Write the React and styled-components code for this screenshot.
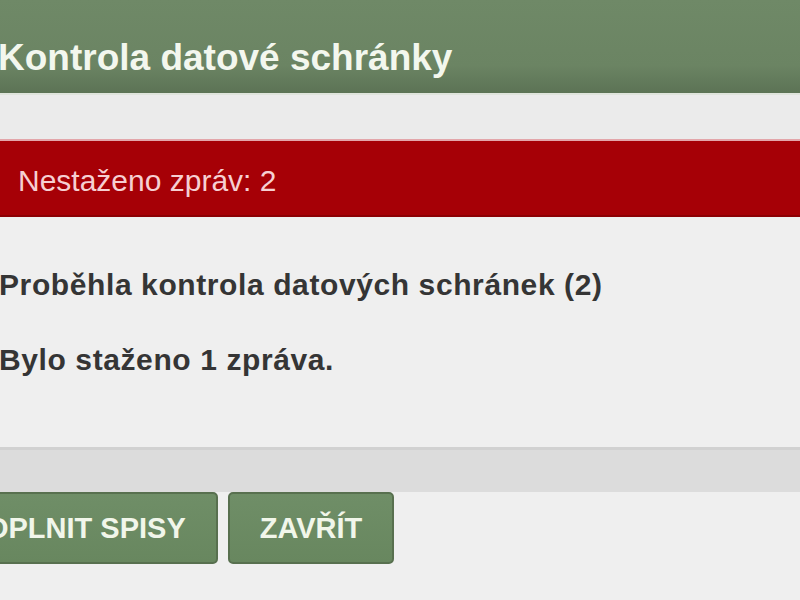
import React from "react";
import styled, { createGlobalStyle } from "styled-components";

const GlobalStyle = createGlobalStyle`
  html, body {
    margin: 0;
    padding: 0;
    background: #efefef;
    overflow: hidden;
  }
  body {
    font-family: "Liberation Sans", Arial, sans-serif;
  }
`;

const Dialog = styled.div`
  width: 900px;
  margin-left: -60px;
  display: flex;
  flex-direction: column;
`;

const Header = styled.div`
  height: 95px;
  display: flex;
  align-items: flex-start;
  padding: 39px 0 0 58px;
  background: linear-gradient(#6f8967 0%, #6b8463 70%, #5c7355 100%);
  border-bottom: 2px solid #dfe4dc;
  box-sizing: border-box;
`;

const Title = styled.h1`
  margin: 0;
  font-size: 37px;
  line-height: 37px;
  font-weight: 700;
  color: #f3f7ee;
`;

const Spacer = styled.div`
  height: 44px;
  background: #ebebeb;
`;

const Alert = styled.div`
  height: 78px;
  display: flex;
  align-items: center;
  padding: 6px 0 0 78px;
  background: #a60006;
  border-top: 2px solid #e3a6aa;
  border-bottom: 2px solid #8c0004;
  box-sizing: border-box;
`;

const AlertText = styled.span`
  font-size: 30px;
  color: #f6cfd2;
`;

const Body = styled.div`
  height: 230px;
  padding: 52px 0 0 59px;
  box-sizing: border-box;
  display: flex;
  flex-direction: column;
  gap: 43px;
`;

const Line = styled.p`
  margin: 0;
  font-size: 30px;
  line-height: 32px;
  font-weight: 700;
  letter-spacing: 0.6px;
  color: #353535;
`;

const Divider = styled.div`
  height: 45px;
  background: #dcdcdc;
  border-top: 3px solid #d1d1d1;
  box-sizing: border-box;
`;

const ButtonRow = styled.div`
  display: flex;
  gap: 10px;
  margin-left: -7px;
`;

const Button = styled.button`
  height: 72px;
  padding: 0 30px;
  border: 2px solid #58704f;
  border-radius: 5px;
  background: linear-gradient(#6f8e67, #68875f);
  color: #f1f6ea;
  font-family: "Liberation Sans", Arial, sans-serif;
  font-size: 29px;
  font-weight: 700;
  text-transform: uppercase;
  cursor: pointer;
`;

export default function App() {
  return (
    <>
      <GlobalStyle />
      <Dialog>
        <Header>
          <Title>Kontrola datové schránky</Title>
        </Header>
        <Spacer />
        <Alert>
          <AlertText>Nestaženo zpráv: 2</AlertText>
        </Alert>
        <Body>
          <Line>Proběhla kontrola datových schránek (2)</Line>
          <Line>Bylo staženo 1 zpráva.</Line>
        </Body>
        <Divider />
        <ButtonRow>
          <Button>Doplnit spisy</Button>
          <Button>Zavřít</Button>
        </ButtonRow>
      </Dialog>
    </>
  );
}
